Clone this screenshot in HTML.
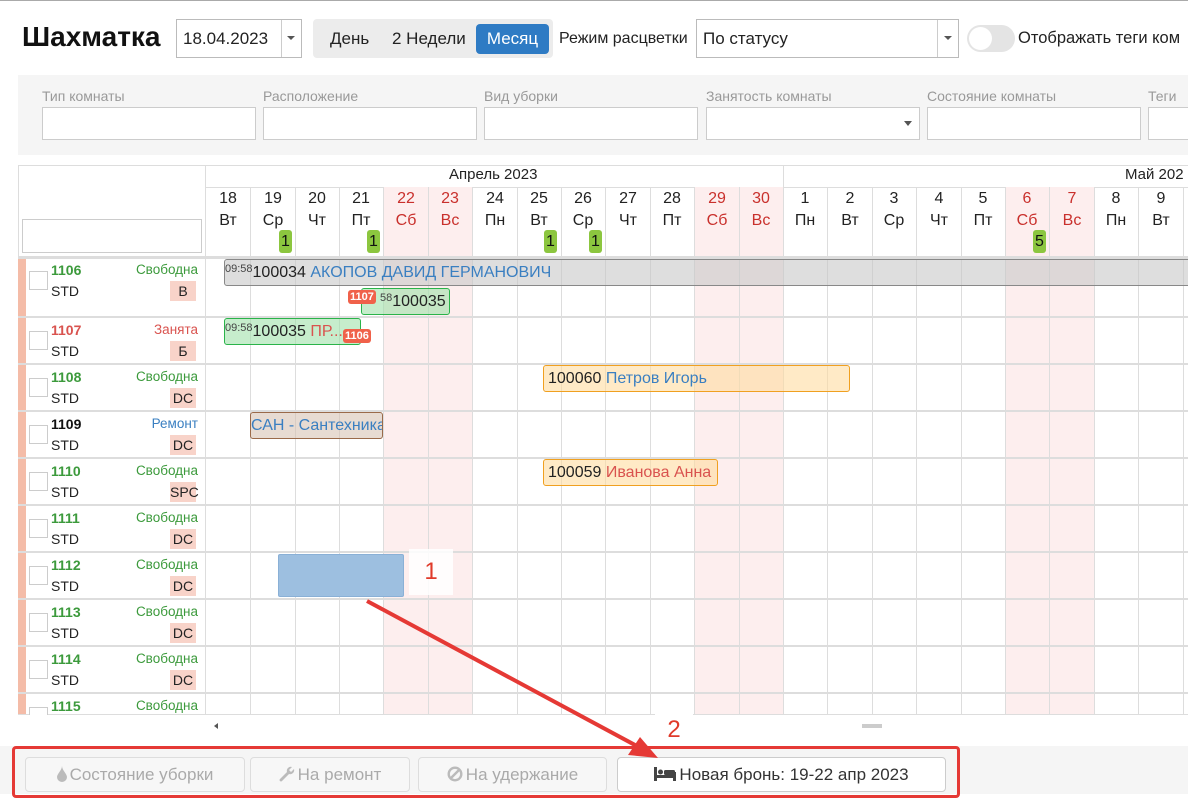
<!DOCTYPE html>
<html><head><meta charset="utf-8"><style>
*{box-sizing:border-box;margin:0;padding:0}
body{width:1188px;height:804px;overflow:hidden;background:#fff;font-family:"Liberation Sans","DejaVu Sans",sans-serif;font-size:15px;color:#222;position:relative}
.a{position:absolute}
.inp{position:absolute;background:#fff;border:1px solid #ccc}
.lbl{position:absolute;color:#999;font-size:14px}
.vl{position:absolute;top:187px;width:1px;height:528px;background:#ddd}
.pink{position:absolute;top:187px;width:44px;height:528px;background:#fdeeee}
.day{position:absolute;top:188px;width:44px;text-align:center;font-size:16px;line-height:22px}
.red{color:#c9302c}
.bdg{position:absolute;top:230px;width:13px;height:23px;background:#8cc63f;border-radius:3px;font-size:16px;line-height:23px;text-align:center;color:#111}
.hl{position:absolute;left:18px;width:1170px;height:2px;background:#ddd}
.num{position:absolute;left:51px;font-weight:bold;font-size:14px}
.st{position:absolute;right:990px;font-size:13.5px;text-align:right}
.std{position:absolute;left:51px;font-size:14px}
.tag{position:absolute;left:170px;width:26px;height:20px;background:#f8d3c9;text-align:center;font-size:14px;line-height:20px}
.cb{position:absolute;left:29px;width:19px;height:19px;border:1px solid #ccc;background:#fff}
.g{color:#3c9a3c}
.bk{position:absolute;height:27px;border-radius:3px;font-size:16px;line-height:26px;white-space:nowrap;overflow:hidden}
.sm{font-size:11px;vertical-align:top;line-height:18px;color:#444}
.blue{color:#3a7fc1}
.rb{position:absolute;height:14px;background:#f0614a;color:#fff;font-size:11px;font-weight:bold;border-radius:3px;line-height:14px;padding:0 2px}
.btn{position:absolute;top:757px;height:35px;border:1px solid #ddd;border-radius:4px;background:#f7f7f7;color:#aaa;font-size:17px;line-height:33px;text-align:center}
.btn svg{vertical-align:-2px;margin-right:3px}
</style></head><body>
<div class="a" style="left:0;top:0;width:1188px;height:1px;background:#aaa"></div>
<div class="a" style="left:22px;top:21px;font-size:28px;font-weight:bold;color:#111">Шахматка</div>
<div class="inp" style="left:176px;top:19px;width:126px;height:39px;border-color:#bbb"></div>
<div class="a" style="left:183px;top:29px;font-size:17px">18.04.2023</div>
<div class="a" style="left:281px;top:20px;width:1px;height:37px;background:#ccc"></div>
<div class="a" style="left:287px;top:36px;border:4px solid transparent;border-top:4px solid #555"></div>
<div class="a" style="left:313px;top:19px;width:240px;height:39px;background:#ececec;border-radius:4px"></div>
<div class="a" style="left:330px;top:29px;font-size:17px">День</div>
<div class="a" style="left:392px;top:29px;font-size:17px">2 Недели</div>
<div class="a" style="left:476px;top:24px;width:73px;height:30px;background:#2e7bc4;border-radius:4px;color:#fff;font-size:17px;line-height:30px;text-align:center">Месяц</div>
<div class="a" style="left:559px;top:30px;font-size:16px">Режим расцветки</div>
<div class="inp" style="left:696px;top:19px;width:263px;height:39px;border-color:#bbb"></div>
<div class="a" style="left:703px;top:29px;font-size:17px">По статусу</div>
<div class="a" style="left:937px;top:20px;width:1px;height:37px;background:#ccc"></div>
<div class="a" style="left:944px;top:36px;border:4px solid transparent;border-top:4px solid #555"></div>
<div class="a" style="left:967px;top:25px;width:48px;height:27px;background:#e4e4e4;border-radius:14px"></div>
<div class="a" style="left:969px;top:27px;width:23px;height:23px;background:#fff;border-radius:50%"></div>
<div class="a" style="left:1018px;top:29px;font-size:16.5px">Отображать теги ком</div>

<div class="a" style="left:18px;top:75px;width:1170px;height:80px;background:#f5f5f5"></div>
<div class="lbl" style="left:42px;top:88px">Тип комнаты</div>
<div class="lbl" style="left:263px;top:88px">Расположение</div>
<div class="lbl" style="left:484px;top:88px">Вид уборки</div>
<div class="lbl" style="left:706px;top:88px">Занятость комнаты</div>
<div class="lbl" style="left:927px;top:88px">Состояние комнаты</div>
<div class="lbl" style="left:1148px;top:88px">Теги</div>
<div class="inp" style="left:42px;top:107px;width:214px;height:33px"></div>
<div class="inp" style="left:263px;top:107px;width:214px;height:33px"></div>
<div class="inp" style="left:484px;top:107px;width:214px;height:33px"></div>
<div class="inp" style="left:706px;top:107px;width:214px;height:33px"></div>
<div class="a" style="left:904px;top:121px;border:4px solid transparent;border-top:5px solid #555"></div>
<div class="inp" style="left:927px;top:107px;width:214px;height:33px"></div>
<div class="inp" style="left:1148px;top:107px;width:60px;height:33px"></div>

<div class="a" style="left:18px;top:165px;width:1170px;height:1px;background:#ddd"></div>
<div class="a" style="left:18px;top:165px;width:1px;height:550px;background:#ddd"></div>
<div class="a" style="left:205px;top:165px;width:1px;height:550px;background:#ddd"></div>
<div class="a" style="left:206px;top:187px;width:982px;height:1px;background:#ddd"></div>
<div class="a" style="left:783px;top:165px;width:1px;height:22px;background:#ddd"></div>
<div class="a" style="left:449px;top:166px;font-size:15px">Апрель 2023</div>
<div class="a" style="left:1125px;top:166px;font-size:15px">Май 202</div>
<div class="inp" style="left:22px;top:219px;width:180px;height:34px"></div>

<div class="pink" style="left:384px"></div><div class="pink" style="left:428px"></div>
<div class="pink" style="left:695px"></div><div class="pink" style="left:739px"></div>
<div class="pink" style="left:1006px"></div><div class="pink" style="left:1050px"></div>

<div class="vl" style="left:250px"></div><div class="vl" style="left:295px"></div><div class="vl" style="left:339px"></div><div class="vl" style="left:383px"></div><div class="vl" style="left:428px"></div><div class="vl" style="left:472px"></div><div class="vl" style="left:517px"></div><div class="vl" style="left:561px"></div><div class="vl" style="left:605px"></div><div class="vl" style="left:650px"></div><div class="vl" style="left:694px"></div><div class="vl" style="left:739px"></div><div class="vl" style="left:783px"></div><div class="vl" style="left:827px"></div><div class="vl" style="left:872px"></div><div class="vl" style="left:916px"></div><div class="vl" style="left:961px"></div><div class="vl" style="left:1005px"></div><div class="vl" style="left:1049px"></div><div class="vl" style="left:1094px"></div><div class="vl" style="left:1138px"></div><div class="vl" style="left:1183px"></div>

<div class="day" style="left:206px">18<br>Вт</div><div class="day" style="left:251px">19<br>Ср</div><div class="day" style="left:295px">20<br>Чт</div><div class="day" style="left:339px">21<br>Пт</div><div class="day red" style="left:384px">22<br>Сб</div><div class="day red" style="left:428px">23<br>Вс</div><div class="day" style="left:473px">24<br>Пн</div><div class="day" style="left:517px">25<br>Вт</div><div class="day" style="left:561px">26<br>Ср</div><div class="day" style="left:606px">27<br>Чт</div><div class="day" style="left:650px">28<br>Пт</div><div class="day red" style="left:695px">29<br>Сб</div><div class="day red" style="left:739px">30<br>Вс</div><div class="day" style="left:783px">1<br>Пн</div><div class="day" style="left:828px">2<br>Вт</div><div class="day" style="left:872px">3<br>Ср</div><div class="day" style="left:917px">4<br>Чт</div><div class="day" style="left:961px">5<br>Пт</div><div class="day red" style="left:1005px">6<br>Сб</div><div class="day red" style="left:1050px">7<br>Вс</div><div class="day" style="left:1094px">8<br>Пн</div><div class="day" style="left:1139px">9<br>Вт</div>

<div class="bdg" style="left:279px">1</div><div class="bdg" style="left:367px">1</div><div class="bdg" style="left:544px">1</div><div class="bdg" style="left:589px">1</div><div class="bdg" style="left:1033px">5</div>

<div class="a" style="left:18px;top:257px;width:8px;height:458px;background:#f4bca8"></div>
<div class="hl" style="top:256px;height:3px"></div>
<div class="hl" style="top:316px"></div><div class="hl" style="top:363px"></div><div class="hl" style="top:410px"></div><div class="hl" style="top:457px"></div><div class="hl" style="top:504px"></div><div class="hl" style="top:551px"></div><div class="hl" style="top:598px"></div><div class="hl" style="top:645px"></div><div class="hl" style="top:692px"></div>
<div class="a" style="left:18px;top:714px;width:1170px;height:1px;background:#ddd"></div>

<div class="cb" style="top:271px"></div><div class="num g" style="top:262px">1106</div><div class="st g" style="top:262px">Свободна</div><div class="std" style="top:283px">STD</div><div class="tag" style="top:281px">В</div>
<div class="cb" style="top:331px"></div><div class="num" style="top:322px;color:#d9534f">1107</div><div class="st" style="top:322px;color:#d9534f">Занята</div><div class="std" style="top:343px">STD</div><div class="tag" style="top:341px">Б</div>
<div class="cb" style="top:378px"></div><div class="num g" style="top:369px">1108</div><div class="st g" style="top:369px">Свободна</div><div class="std" style="top:390px">STD</div><div class="tag" style="top:388px">DC</div>
<div class="cb" style="top:425px"></div><div class="num" style="top:416px;color:#111">1109</div><div class="st blue" style="top:416px">Ремонт</div><div class="std" style="top:437px">STD</div><div class="tag" style="top:435px">DC</div>
<div class="cb" style="top:472px"></div><div class="num g" style="top:463px">1110</div><div class="st g" style="top:463px">Свободна</div><div class="std" style="top:484px">STD</div><div class="tag" style="top:482px">SPC</div>
<div class="cb" style="top:519px"></div><div class="num g" style="top:510px">1111</div><div class="st g" style="top:510px">Свободна</div><div class="std" style="top:531px">STD</div><div class="tag" style="top:529px">DC</div>
<div class="cb" style="top:566px"></div><div class="num g" style="top:557px">1112</div><div class="st g" style="top:557px">Свободна</div><div class="std" style="top:578px">STD</div><div class="tag" style="top:576px">DC</div>
<div class="cb" style="top:613px"></div><div class="num g" style="top:604px">1113</div><div class="st g" style="top:604px">Свободна</div><div class="std" style="top:625px">STD</div><div class="tag" style="top:623px">DC</div>
<div class="cb" style="top:660px"></div><div class="num g" style="top:651px">1114</div><div class="st g" style="top:651px">Свободна</div><div class="std" style="top:672px">STD</div><div class="tag" style="top:670px">DC</div>
<div class="cb" style="top:707px;height:8px;border-bottom:none"></div><div class="num g" style="top:698px">1115</div><div class="st g" style="top:698px">Свободна</div>

<div class="bk" style="left:224px;top:259px;width:970px;background:rgba(200,200,200,.6);border:1px solid #888"><span class="sm">09:58</span>100034 <span class="blue">АКОПОВ ДАВИД ГЕРМАНОВИЧ</span></div>
<div class="bk" style="left:361px;top:288px;width:89px;background:rgba(160,225,170,.6);border:1px solid #2ab34a;padding-left:18px"><span class="sm">58</span>100035</div>
<div class="rb" style="left:348px;top:290px">1107</div>
<div class="bk" style="left:224px;top:318px;width:137px;background:rgba(160,225,170,.6);border:1px solid #2ab34a"><span class="sm">09:58</span>100035 <span style="color:#d9534f">ПР...</span></div>
<div class="rb" style="left:343px;top:329px">1106</div>
<div class="bk" style="left:543px;top:365px;width:307px;background:rgba(255,220,160,.6);border:1px solid #f0a020;padding-left:4px">100060 <span class="blue">Петров Игорь</span></div>
<div class="bk" style="left:250px;top:412px;width:133px;background:rgba(215,195,180,.6);border:1px solid #9a6a4a"><span class="blue">САН - Сантехника</span></div>
<div class="bk" style="left:543px;top:459px;width:175px;background:rgba(255,220,160,.6);border:1px solid #f0a020;padding-left:4px">100059 <span style="color:#d9534f">Иванова Анна</span></div>
<div class="a" style="left:278px;top:554px;width:126px;height:43px;background:#9dbfe0;border:1px solid #8ab0d6;border-radius:2px"></div>
<div class="a" style="left:409px;top:549px;width:44px;height:46px;background:rgba(255,255,255,.85);color:#e03a2a;font-size:24px;text-align:center;line-height:46px">1</div>

<div class="a" style="left:211px;top:723px;border:3px solid transparent;border-right:4px solid #555"></div>
<div class="a" style="left:862px;top:724px;width:20px;height:4px;background:#ccc"></div>
<div class="a" style="left:655px;top:713px;width:38px;height:35px;background:#fff;color:#e03a2a;font-size:24px;text-align:center;line-height:34px">2</div>

<div class="a" style="left:0;top:746px;width:1188px;height:48px;background:#f5f5f5"></div>
<div class="btn" style="left:25px;width:220px"><svg width="10" height="16" viewBox="0 0 10 16"><path d="M5 0 C5 4 0 8 0 11 A5 5 0 0 0 10 11 C10 8 5 4 5 0Z" fill="#bbb"/></svg>Состояние уборки</div>
<div class="btn" style="left:250px;width:160px"><svg width="16" height="16" viewBox="0 0 16 16"><path d="M15 3 L12 6 L10 4 L13 1 A4 4 0 0 0 8 6 L1 13 A1.4 1.4 0 0 0 3 15 L10 8 A4 4 0 0 0 15 3Z" fill="#bbb"/></svg>На ремонт</div>
<div class="btn" style="left:418px;width:189px"><svg width="16" height="16" viewBox="0 0 16 16"><circle cx="8" cy="8" r="6.3" fill="none" stroke="#bbb" stroke-width="2.4"/><line x1="3.5" y1="12.5" x2="12.5" y2="3.5" stroke="#bbb" stroke-width="2.4"/></svg>На удержание</div>
<div class="btn" style="left:617px;width:329px;background:#fff;color:#333;border-color:#ccc">
<svg width="22" height="16" viewBox="0 0 22 16"><rect x="0" y="1" width="3" height="14" fill="#444"/><rect x="3" y="9" width="19" height="3" fill="#444"/><rect x="19" y="6" width="3" height="9" fill="#444"/><circle cx="6.5" cy="6" r="2.5" fill="#444"/><rect x="10" y="4" width="11" height="5" rx="1.5" fill="#444"/></svg>Новая бронь: 19-22 апр 2023</div>
<div class="a" style="left:12px;top:746px;width:948px;height:52px;border:3px solid #e53935;border-radius:4px"></div>

<svg class="a" style="left:0;top:0" width="1188" height="804"><line x1="367" y1="601" x2="648" y2="752" stroke="#e53935" stroke-width="4"/><polygon points="658,758 628,755 640,737" fill="#e53935"/></svg>
</body></html>
